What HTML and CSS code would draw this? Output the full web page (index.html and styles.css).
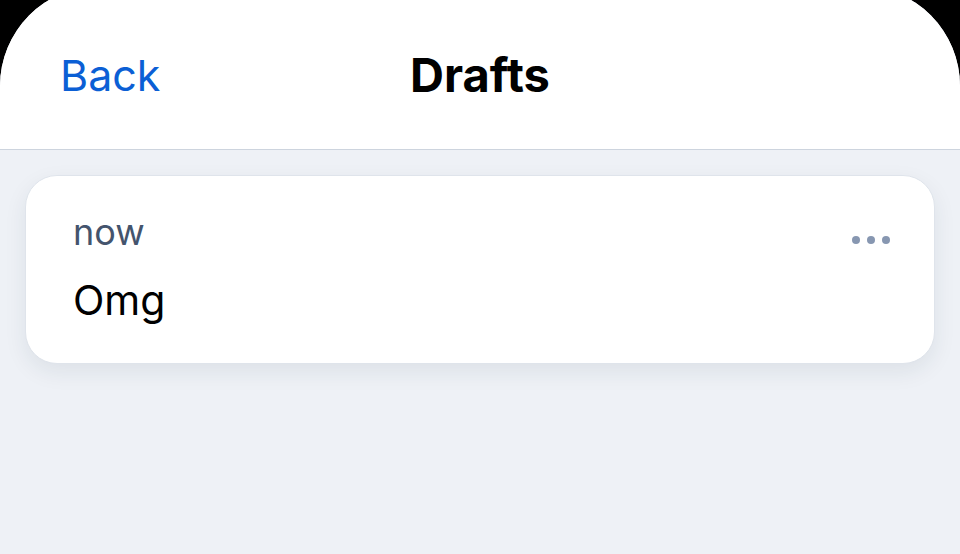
FILE: index.html
```html
<!DOCTYPE html>
<html>
<head>
<link rel="stylesheet" href="styles.css">
</head>
<body class="screen">

<div class="sheet">
  <div class="topbar">
    <a class="back">Back</a>
    <h1 class="title">Drafts</h1>
    <span class="spacer"></span>
  </div>

  <div class="list">
    <div class="draft">
      <div class="draft_head">
        <span class="when">now</span>
        <span class="more"><i></i><i></i><i></i></span>
      </div>
      <div class="draft_text">Omg</div>
    </div>
  </div>
</div>

</body>
</html>
```

FILE: styles.css
```css
html, body {
  margin: 0;
  height: 100%;
}

.screen {
  background-color: black;
  font-family: Inter, "Noto Sans", sans-serif;
  overflow: hidden;
}

.sheet {
  margin-top: -14px;
  height: 568px;
  background-color: #eef1f6;
  border-radius: 100px 100px 0 0;
  overflow: hidden;
}

.topbar {
  height: 164px;
  box-sizing: border-box;
  padding: 14px 60px 0 60px;
  background-color: white;
  border-bottom: 1px solid #cdd4de;
  display: flex;
  align-items: center;
  justify-content: space-between;
}

.back {
  width: 120px;
  color: #0b5fd5;
  font-size: 43px;
  cursor: pointer;
}

.title {
  margin: 0;
  font-size: 47px;
  font-weight: 700;
  color: black;
}

.spacer {
  width: 120px;
}

.list {
  padding: 25px 25px;
}

.draft {
  background-color: white;
  border: 1px solid #dfe4eb;
  border-radius: 32px;
  box-shadow: 0 8px 22px rgba(30, 45, 70, 0.08);
  padding: 34px 44px 0 47px;
  height: 189px;
  box-sizing: border-box;
}

.draft_head {
  display: flex;
  justify-content: space-between;
  align-items: center;
}

.when {
  color: #44546d;
  font-size: 36px;
}

.more {
  display: flex;
  gap: 7px;
  margin-top: 16px;
}

.more i {
  width: 8px;
  height: 8px;
  border-radius: 50%;
  background-color: #8797b1;
}

.draft_text {
  margin-top: 21px;
  font-size: 41px;
  color: black;
}
```
